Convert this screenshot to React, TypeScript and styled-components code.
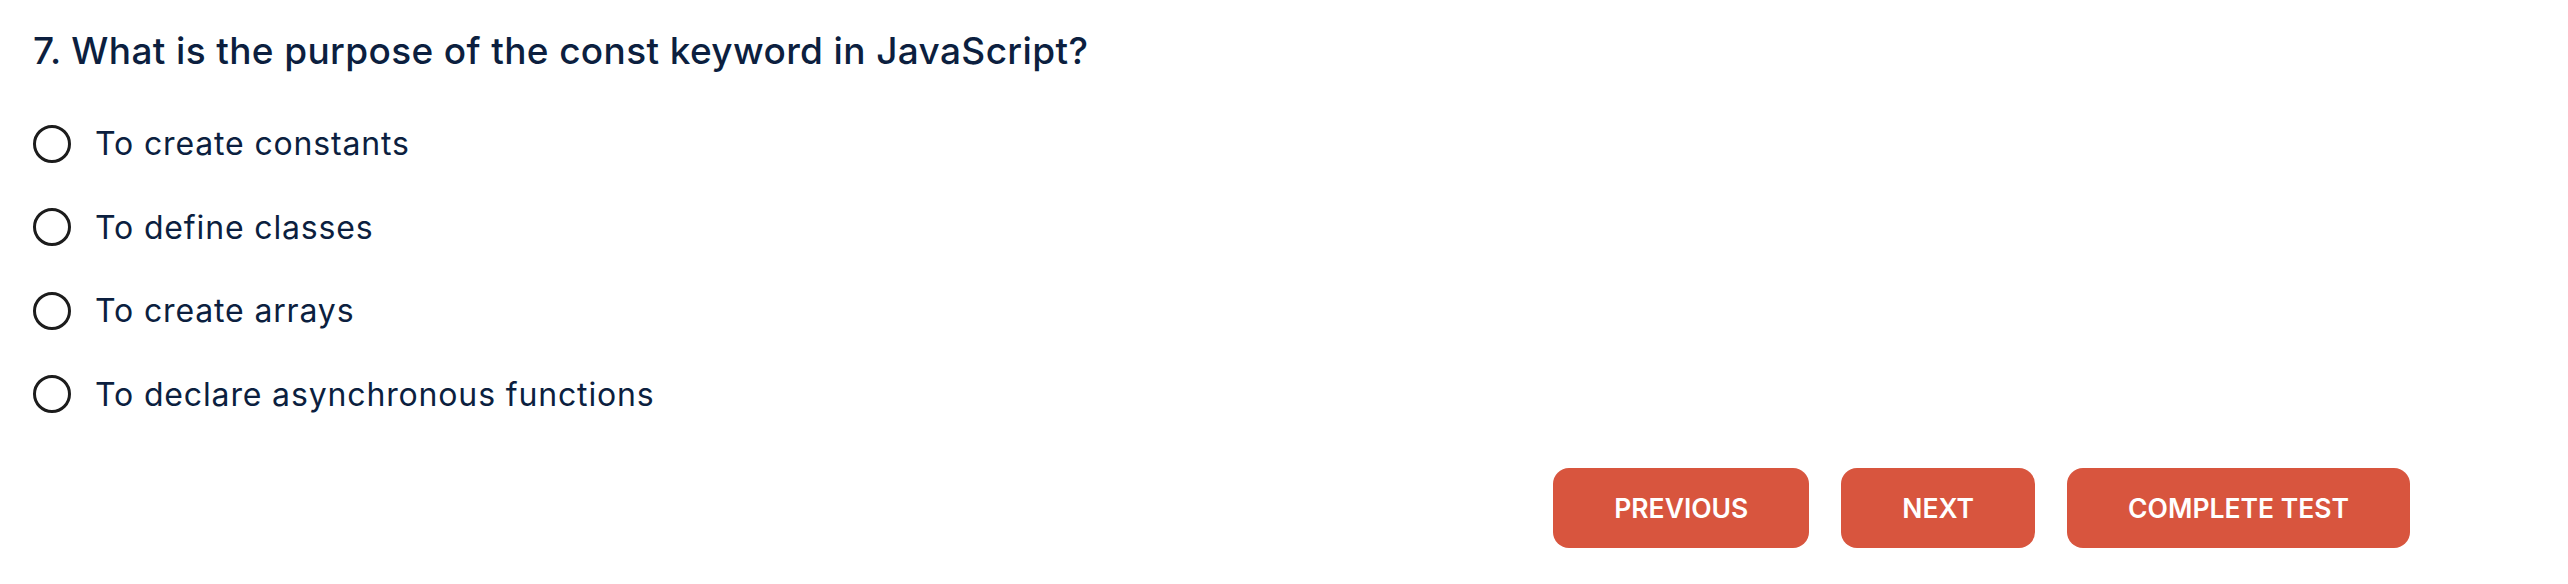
import React from "react";
import styled, { createGlobalStyle } from "styled-components";

const GlobalStyle = createGlobalStyle`
  html, body {
    margin: 0;
    padding: 0;
    background: #ffffff;
  }
  body {
    font-family: Inter, "Open Sans", "Noto Sans", sans-serif;
    color: #0c1f3f;
  }
`;

const Page = styled.main`
  display: flex;
  flex-direction: column;
  padding: 25px 158px 0 33px;
`;

const Title = styled.h2`
  margin: 0;
  font-size: 37px;
  line-height: 52px;
  font-weight: 500;
  letter-spacing: 0.37px;
  color: #0c1f3f;
`;

const Options = styled.div`
  display: flex;
  flex-direction: column;
  margin-top: 25px;
`;

const Option = styled.label`
  display: flex;
  align-items: center;
  gap: 24px;
  height: 83.5px;
  font-size: 32px;
  letter-spacing: 0.85px;
  color: #0c1f3f;
  cursor: pointer;
`;

const Radio = styled.span`
  box-sizing: border-box;
  width: 38px;
  height: 38px;
  border-radius: 50%;
  border: 3.5px solid #1c1c1c;
  flex-shrink: 0;
`;

const Actions = styled.div`
  display: flex;
  justify-content: flex-end;
  gap: 32px;
  margin-top: 32px;
`;

const Button = styled.button`
  height: 80px;
  padding: 0 61px;
  border: none;
  border-radius: 16px;
  background: #d8553e;
  color: #ffffff;
  font-family: Inter, "Open Sans", sans-serif;
  font-size: 26.5px;
  font-weight: 600;
  text-transform: uppercase;
  cursor: pointer;
`;

const options = [
  "To create constants",
  "To define classes",
  "To create arrays",
  "To declare asynchronous functions",
];

export default function App() {
  return (
    <>
      <GlobalStyle />
      <Page>
        <Title>7. What is the purpose of the const keyword in JavaScript?</Title>
        <Options>
          {options.map((o) => (
            <Option key={o}>
              <Radio />
              {o}
            </Option>
          ))}
        </Options>
        <Actions>
          <Button>Previous</Button>
          <Button>Next</Button>
          <Button>Complete Test</Button>
        </Actions>
      </Page>
    </>
  );
}
